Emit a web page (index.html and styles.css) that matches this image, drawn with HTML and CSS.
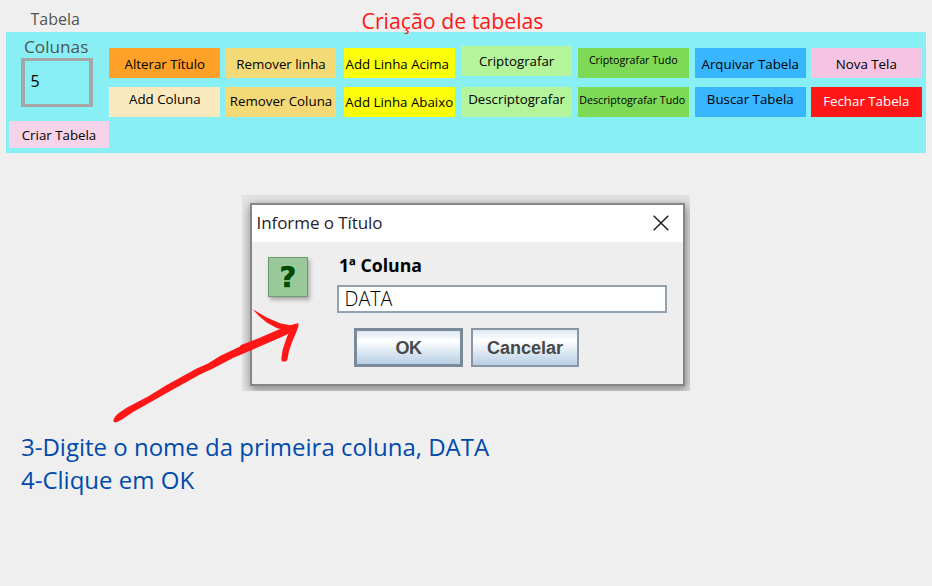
FILE: index.html
```
<!DOCTYPE html>
<html lang="pt-BR">
<head>
<meta charset="utf-8">
<title>Criação de tabelas</title>
<link rel="stylesheet" href="styles.css">
</head>
<body>
<header class="header">
  <span class="caption">Tabela</span>
  <h1 class="title">Criação de tabelas</h1>
</header>
<section class="panel">
  <div class="setup">
    <label class="label" for="cols">Colunas</label>
    <div class="count" id="cols">5</div>
    <button class="btn create">Criar Tabela</button>
  </div>
  <div class="actions">
    <button class="btn orange">Alterar Título</button>
    <button class="btn sand">Remover linha</button>
    <button class="btn yellow acima">Add Linha Acima</button>
    <button class="btn lime raised">Criptografar</button>
    <button class="btn green small high">Criptografar Tudo</button>
    <button class="btn blue">Arquivar Tabela</button>
    <button class="btn pink">Nova Tela</button>
    <button class="btn cream up">Add Coluna</button>
    <button class="btn sand mid">Remover Coluna</button>
    <button class="btn yellow low">Add Linha Abaixo</button>
    <button class="btn lime up">Descriptografar</button>
    <button class="btn green small low nudge">Descriptografar Tudo</button>
    <button class="btn blue up">Buscar Tabela</button>
    <button class="btn red mid">Fechar Tabela</button>
  </div>
</section>
<main class="stage">
  <div class="frame">
    <div class="dialog">
      <div class="bar">
        <span class="bar-title">Informe o Título</span>
        <svg class="close" width="16" height="16" viewBox="0 0 16 16"><path d="M.7.7 15.3 15.3M15.3.7.7 15.3"/></svg>
      </div>
      <div class="body">
        <div class="question">?</div>
        <div class="form">
          <div class="prompt">1ª Coluna</div>
          <div class="field">DATA</div>
          <div class="buttons">
            <button class="dbtn ok">OK</button>
            <button class="dbtn cancel">Cancelar</button>
          </div>
        </div>
      </div>
    </div>
  </div>
  <svg class="arrow" width="190" height="120" viewBox="0 0 190 120">
    <path d="M3.300 112.500C3.300 109 6 106 9.500 103.500L17 98.500L38 87.500L56.700 76L86.700 59.500L98 54.500L110 47L130 37.500L131 36L148 29.500L170 20L182 16L187 20L175 26.500L143 40.500L123 49L103 59.500L90 65.500L56.700 84L40 93.500L23 103L12 110.500L6 113.500Z"/>
    <path d="M142.600 .3L156.700 8.500L170 14.300L180 16.300L188.300 14.300L187 19L176 21.500L166.700 19L156.700 13.500L149 7Z"/>
    <path d="M182 16.500L188.500 14.500L188.300 18L185.500 25L181.700 34L179 42L177.300 51L175.500 52.500H172L171.300 50L172.700 40.500L176.700 28.500L179.500 22Z"/>
  </svg>
</main>
<p class="steps">3-Digite o nome da primeira coluna, DATA<br>4-Clique em OK</p>
</body>
</html>
```

FILE: styles.css
```
* { box-sizing: border-box; }

body {
  margin: 0;
  height: 586px;
  overflow: hidden;
  background: #efefef;
  font-family: "Open Sans", "Noto Sans", sans-serif;
  color: #111;
}

.header {
  display: flex;
  height: 32.400px;
  white-space: nowrap;
}

.caption {
  width: 331px;
  padding: 8px 0 0 30.500px;
  font-size: 16px;
  line-height: 22px;
  color: #545454;
}

.title {
  margin: 6px 0 0 30.500px;
  font-size: 21.300px;
  font-weight: 400;
  line-height: 30px;
  color: #ff1616;
}

.panel {
  display: flex;
  height: 121px;
  margin: 0 6px;
  background: #88f0f4;
}

.setup {
  display: flex;
  flex-direction: column;
  width: 103.300px;
  padding-left: 3px;
}

.label {
  height: 26px;
  padding: 3px 0 0 15px;
  font-size: 17.200px;
  line-height: 23px;
  color: #545454;
}

.count {
  width: 72px;
  height: 49px;
  margin: 0 0 14px 12px;
  padding-left: 5.500px;
  border: solid #a6a6a6;
  border-width: 3px 4px;
  font-size: 16px;
  line-height: 41px;
  color: #000;
}

.actions {
  display: grid;
  grid-template-columns: 116.200px 118.300px 117.300px 116.700px 117px 116px 111px;
  grid-template-rows: 30px 30px;
  row-gap: 8.700px;
  padding-top: 16px;
}

.btn {
  width: 111px;
  height: 30px;
  padding: 2px 0 0;
  border: 0;
  font: 13.3px/28px "Open Sans", "Noto Sans", sans-serif;
  color: #000;
  text-align: center;
  white-space: nowrap;
}

.create { width: 100px; height: 27px; padding: 1px 0 0; line-height: 26px; background: #f5d3e8; }
.orange { background: #ffa129; }
.cream { background: #f9e9bd; }
.sand { background: #f4da76; }
.yellow { background: #fbff0a; }
.lime { background: #b4f49a; }
.green { background: #7ed957; }
.blue { background: #38b6ff; }
.pink { background: #f6c4e2; }
.red { background: #ff1616; color: #fff; }
.small { font-size: 10.700px; }
.acima { padding-right: 4px; }
.raised { margin-top: -2px; padding-top: 0; }
.up { padding: 0 0 6px; line-height: 24px; }
.mid { padding: 0 0 2px; }
.low { padding: 0; line-height: 30px; }
.small.low { padding: 0 0 4px; line-height: 26px; }
.nudge { text-indent: -2px; }
.high { padding: 0 0 6px; line-height: 24px; }

.stage {
  position: relative;
  padding: 41.600px 0 0 242px;
}

.frame {
  width: 448px;
  height: 196px;
  padding: 8px 5px 5px 8px;
  overflow: hidden;
  background: #e3e3e3;
}

.dialog {
  height: 183px;
  border: 2px solid #868686;
  background: #eee;
  box-shadow: 1px 3px 9px 1px #888;
}

.bar {
  display: flex;
  justify-content: space-between;
  height: 37px;
  padding: 0 14px 0 4.500px;
  background: #fff;
}

.bar-title {
  font-size: 17px;
  line-height: 35px;
  color: #26222e;
  letter-spacing: -.07px;
}

.close { margin-top: 10px; stroke: #222; stroke-width: 1.500; fill: none; }

.body { display: flex; }

.question {
  width: 40px;
  height: 40px;
  margin: 15px 29px 0 16px;
  border: 1.500px solid #6d9a6d;
  background: #99c999;
  box-shadow: 2px 3px 4px #aaa;
  font: bold 29px/38px "DejaVu Sans", sans-serif;
  text-align: center;
  color: #004b00;
  -webkit-text-stroke: .7px #004b00;
  text-shadow: 0 0 2px #d0ffd0;
}

.prompt {
  height: 43px;
  padding: 12px 0 0 2px;
  font-size: 17.700px;
  font-weight: 700;
  line-height: 23px;
  color: #000;
}

.field {
  width: 330px;
  height: 28px;
  padding-left: 5.500px;
  border: 2px solid #92a1b0;
  background: #fff;
  font-size: 19.700px;
  font-weight: 300;
  line-height: 24px;
  color: #000;
}

.buttons { display: flex; gap: 9px; padding: 15px 0 0 17px; }

.dbtn {
  width: 108px;
  height: 39px;
  padding: 2px 0 0;
  border: 2px solid #8796a5;
  background: linear-gradient(#dde8f3, #fff 30%, #b8cfe5);
  font: bold 18px "Liberation Sans", sans-serif;
  color: #484848;
}

.ok { width: 109px; border-width: 3px; border-color: #7a8a99; letter-spacing: -.6px; }
.cancel { margin-left: -1px; }

.arrow {
  position: absolute;
  left: 110px;
  top: 156px;
  fill: #ff1616;
}

.steps {
  margin: 39px 0 0 21px;
  font-size: 24px;
  line-height: 33px;
  color: #004aad;
}
```
